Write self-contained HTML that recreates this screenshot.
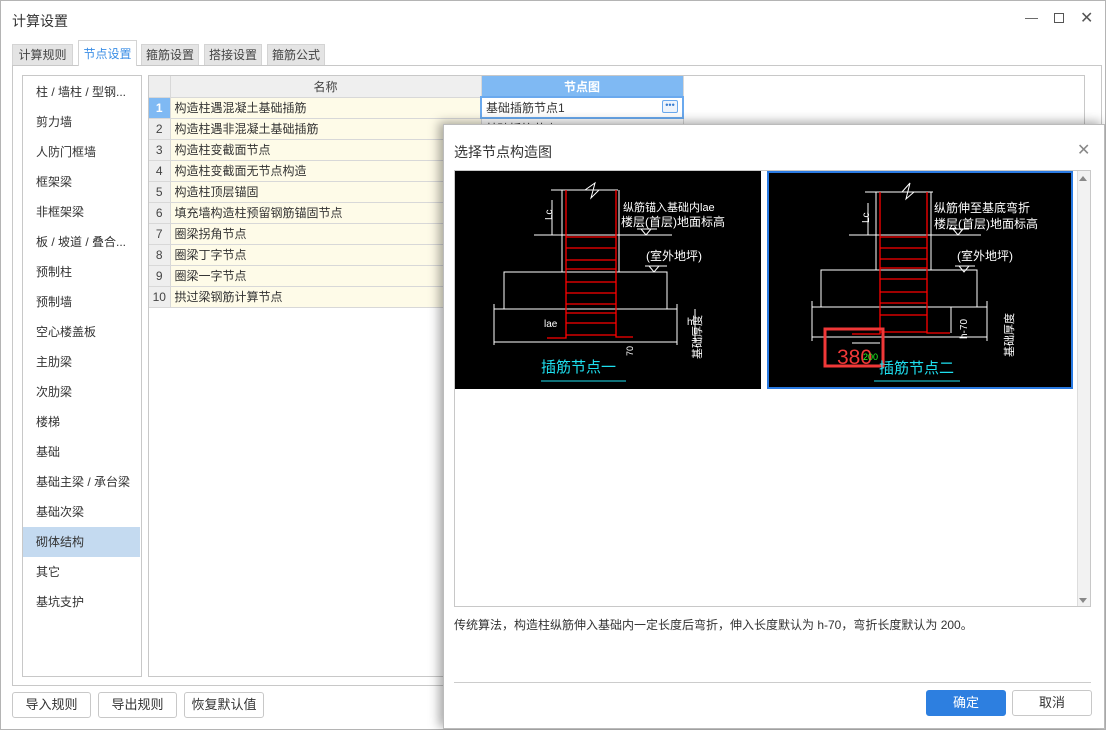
<!DOCTYPE html>
<html><head><meta charset="utf-8"><style>
*{box-sizing:border-box;margin:0;padding:0}
body{width:1106px;height:730px;overflow:hidden;background:#fff;font-family:"Liberation Sans","Noto Sans CJK SC",sans-serif;font-size:12px;color:#333;position:relative}
.a{position:absolute}
.win{left:0;top:0;width:1106px;height:730px;border:1px solid #b4b4b4;background:#fff}
.tab{top:44px;height:21px;background:#e4e4e4;border:1px solid #d4d4d4;border-bottom:none;text-align:center;line-height:20px;color:#444}
.list div{height:30px;line-height:30px;padding-left:13px;white-space:nowrap}
.grid td{height:21px;border-right:1px solid #d8d8d8;border-bottom:1px solid #d8d8d8;padding-left:4px;white-space:nowrap;overflow:hidden}
.grid td.n{background:#eee;text-align:center;padding:0;color:#444}
.grid td.y{background:#fefbe8}
.btn{height:26px;border:1px solid #c8c8c8;border-radius:3px;background:#fff;text-align:center;line-height:24px;font-size:13px}
</style></head><body>
<div class="a win"></div>
<div class="a" style="left:12px;top:11px;font-size:14px;color:#333">计算设置</div>
<div class="a" style="left:1025px;top:10px;font-size:13px;color:#555">&#8212;</div>
<div class="a" style="left:1054px;top:13px;width:10px;height:10px;border:1px solid #555"></div>
<div class="a" style="left:1080px;top:8px;font-size:16px;color:#555">&#x2715;</div>

<div class="a tab" style="left:12px;width:61px">计算规则</div>
<div class="a tab" style="left:78px;top:40px;height:26px;width:59px;background:#fff;color:#3a8ee6;line-height:26px;z-index:2">节点设置</div>
<div class="a tab" style="left:141px;width:58px">箍筋设置</div>
<div class="a tab" style="left:204px;width:58px">搭接设置</div>
<div class="a tab" style="left:267px;width:58px">箍筋公式</div>
<div class="a" style="left:12px;top:65px;width:1090px;height:621px;border:1px solid #c8c8c8"></div>

<div class="a list" style="left:22px;top:75px;width:120px;height:602px;border:1px solid #c8c8c8;padding-top:1px">
<div>柱 / 墙柱 / 型钢...</div><div>剪力墙</div><div>人防门框墙</div><div>框架梁</div><div>非框架梁</div><div>板 / 坡道 / 叠合...</div><div>预制柱</div><div>预制墙</div><div>空心楼盖板</div><div>主肋梁</div><div>次肋梁</div><div>楼梯</div><div>基础</div><div>基础主梁 / 承台梁</div><div>基础次梁</div><div style="background:#c4daf0;margin-right:1px">砌体结构</div><div>其它</div><div>基坑支护</div>
</div>

<div class="a" style="left:148px;top:75px;width:937px;height:602px;border:1px solid #c8c8c8"></div>
<table class="a grid" style="left:149px;top:76px;border-collapse:collapse;table-layout:fixed;width:534px">
<col style="width:21px"><col style="width:311px"><col style="width:202px">
<tr><td class="n"></td><td class="n" style="background:#efefef">名称</td><td style="background:#7fb9f3;color:#fff;text-align:center;padding:0;font-weight:bold">节点图</td></tr>
<tr><td class="n" style="background:#7fb9f3;color:#fff;font-weight:bold">1</td><td class="y">构造柱遇混凝土基础插筋</td><td style="border:2px solid #6aa9ee;position:relative">基础插筋节点1<span style="position:absolute;right:4px;top:2px;width:16px;height:13px;border:1px solid #6aa9ee;border-radius:2px;font-size:9px;line-height:8px;text-align:center;color:#3a7ed0;background:#eef4fc">•••</span></td></tr>
<tr><td class="n">2</td><td class="y">构造柱遇非混凝土基础插筋</td><td>基础插筋节点1</td></tr>
<tr><td class="n">3</td><td class="y">构造柱变截面节点</td><td></td></tr>
<tr><td class="n">4</td><td class="y">构造柱变截面无节点构造</td><td></td></tr>
<tr><td class="n">5</td><td class="y">构造柱顶层锚固</td><td></td></tr>
<tr><td class="n">6</td><td class="y">填充墙构造柱预留钢筋锚固节点</td><td></td></tr>
<tr><td class="n">7</td><td class="y">圈梁拐角节点</td><td></td></tr>
<tr><td class="n">8</td><td class="y">圈梁丁字节点</td><td></td></tr>
<tr><td class="n">9</td><td class="y">圈梁一字节点</td><td></td></tr>
<tr><td class="n">10</td><td class="y">拱过梁钢筋计算节点</td><td></td></tr>
</table>

<div class="a btn" style="left:12px;top:692px;width:79px">导入规则</div>
<div class="a btn" style="left:98px;top:692px;width:79px">导出规则</div>
<div class="a btn" style="left:184px;top:692px;width:80px">恢复默认值</div>

<!-- dialog -->
<div class="a" style="left:443px;top:124px;width:662px;height:605px;background:#fff;border:1px solid #bbb;box-shadow:-4px -2px 10px rgba(0,0,0,.35)"></div>
<div class="a" style="left:454px;top:142px;font-size:14px;color:#333">选择节点构造图</div>
<div class="a" style="left:1077px;top:140px;font-size:16px;color:#888">&#x2715;</div>
<div class="a" style="left:454px;top:170px;width:637px;height:437px;border:1px solid #c8c8c8"></div>
<div class="a" style="left:1077px;top:171px;width:13px;height:435px;background:#f2f2f2;border-left:1px solid #ddd"></div>
<div class="a" style="left:1079px;top:176px;width:0;height:0;border:4px solid transparent;border-bottom:5px solid #888;border-top:none"></div>
<div class="a" style="left:1079px;top:598px;width:0;height:0;border:4px solid transparent;border-top:5px solid #888;border-bottom:none"></div>

<svg class="a" style="left:455px;top:171px" width="306" height="218" viewBox="0 0 306 218">
<rect width="306" height="218" fill="#000"/>
<g stroke="#fff" stroke-width="1" fill="none">
<line x1="96" y1="19" x2="163" y2="19"/><polyline points="130,19 140,12 136,27 144,19"/>
<line x1="107" y1="19" x2="107" y2="101"/><line x1="164" y1="19" x2="164" y2="101"/>
<line x1="79" y1="64" x2="217" y2="64"/>
<rect x="49" y="101" width="163" height="37"/>
<line x1="39" y1="138" x2="222" y2="138"/><line x1="39" y1="171" x2="222" y2="171"/>
<line x1="39" y1="133" x2="39" y2="174"/><line x1="222" y1="133" x2="222" y2="174"/>
<line x1="97" y1="29" x2="97" y2="64"/><polyline points="182,58 202,58"/><polyline points="186,58 191,64 196,58"/>
<polyline points="190,95 212,95"/><polyline points="194,95 199,101 204,95"/>
<line x1="240" y1="138" x2="240" y2="171"/>
</g>
<g stroke="#f00" stroke-width="1.3" fill="none">
<polyline points="111,19 111,167 92,167"/><polyline points="161,19 161,166 178,166"/>
<path d="M111 66H161M111 77H161M111 89H161M111 98H161M111 111H161M111 122H161M111 133H161M111 142H161M111 152H161M111 164H161"/>
</g>
<g fill="#fff" font-family="Liberation Sans,Noto Sans CJK SC,sans-serif">
<text x="168" y="40" font-size="11">纵筋锚入基础内lae</text>
<text x="166" y="55" font-size="12">楼层(首层)地面标高</text>
<text x="191" y="89" font-size="12">(室外地坪)</text>
<text x="89" y="156" font-size="10">lae</text>
<text x="232" y="154" font-size="10">h</text>
<text transform="translate(97,49) rotate(-90)" font-size="10">Lc</text>
<text transform="translate(246,188) rotate(-90)" font-size="11">基础厚度</text>
<text transform="translate(178,185) rotate(-90)" font-size="9">70</text>
</g>
<text x="86" y="201" fill="#1ee0f0" font-size="15" font-family="Noto Sans CJK SC,sans-serif">插筋节点一</text>
<line x1="86" y1="210" x2="171" y2="210" stroke="#1ee0f0"/>
</svg>

<svg class="a" style="left:767px;top:171px" width="306" height="218" viewBox="0 0 306 218">
<rect width="306" height="218" fill="#000" stroke="#2a7ae2" stroke-width="4"/>
<g stroke="#fff" stroke-width="1" fill="none">
<line x1="98" y1="21" x2="166" y2="21"/><polyline points="135,21 143,12 139,28 147,21"/>
<line x1="109" y1="21" x2="109" y2="99"/><line x1="164" y1="21" x2="164" y2="99"/>
<line x1="82" y1="64" x2="214" y2="64"/>
<rect x="54" y="99" width="156" height="37"/>
<line x1="45" y1="136" x2="220" y2="136"/><line x1="45" y1="166" x2="220" y2="166"/>
<line x1="45" y1="130" x2="45" y2="170"/><line x1="220" y1="130" x2="220" y2="170"/>
<line x1="101" y1="32" x2="101" y2="64"/><polyline points="182,58 202,58"/><polyline points="186,58 191,64 196,58"/>
<polyline points="188,95 208,95"/><polyline points="192,95 197,101 202,95"/>
<line x1="184" y1="136" x2="184" y2="162"/><line x1="85" y1="172" x2="113" y2="172"/>
</g>
<g stroke="#f00" stroke-width="1.3" fill="none">
<polyline points="113,21 113,163 85,163"/><polyline points="160,21 160,162 183,162"/>
<path d="M113 66H160M113 77H160M113 88H160M113 97H160M113 108H160M113 121H160M113 132H160M113 144H160M113 161H160"/>
</g>
<g fill="#fff" font-family="Liberation Sans,Noto Sans CJK SC,sans-serif">
<text x="167" y="41" font-size="12">纵筋伸至基底弯折</text>
<text x="167" y="57" font-size="12">楼层(首层)地面标高</text>
<text x="190" y="89" font-size="12">(室外地坪)</text>
<text transform="translate(102,52) rotate(-90)" font-size="10">Lc</text>
<text transform="translate(200,168) rotate(-90)" font-size="10">h-70</text>
<text transform="translate(246,186) rotate(-90)" font-size="11">基础厚度</text>
</g>
<rect x="58" y="158" width="58" height="37" fill="none" stroke="#f03838" stroke-width="3"/>
<text x="70" y="193" fill="#f03838" font-size="21" font-family="Liberation Sans,sans-serif">380</text>
<text x="96" y="189" fill="#2f2" font-size="9" font-family="Liberation Sans,sans-serif">200</text>
<text x="112" y="202" fill="#1ee0f0" font-size="15" font-family="Noto Sans CJK SC,sans-serif">插筋节点二</text>
<line x1="107" y1="210" x2="193" y2="210" stroke="#1ee0f0"/>
</svg>

<div class="a" style="left:454px;top:616px;font-size:12px;color:#333">传统算法，构造柱纵筋伸入基础内一定长度后弯折，伸入长度默认为 h-70，弯折长度默认为 200。</div>
<div class="a" style="left:454px;top:682px;width:637px;height:1px;background:#ccc"></div>
<div class="a btn" style="left:926px;top:690px;width:80px;background:#2d7fe0;border-color:#2d7fe0;color:#fff">确定</div>
<div class="a btn" style="left:1012px;top:690px;width:80px">取消</div>
</body></html>
